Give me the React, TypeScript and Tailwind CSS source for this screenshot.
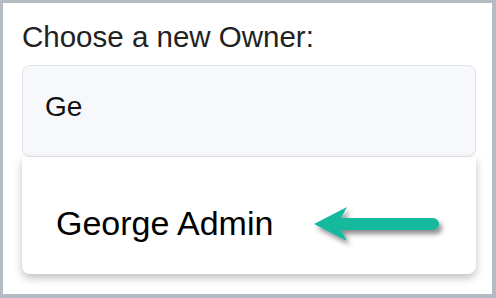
import React from "react";

const ArrowLeft = () => (
  <svg width="140" height="50" viewBox="0 0 140 50" className="shrink-0">
    <defs>
      <filter id="arrowShadow" x="-20%" y="-40%" width="140%" height="200%">
        <feDropShadow dx="3" dy="4" stdDeviation="2.5" floodColor="#000" floodOpacity="0.45" />
      </filter>
    </defs>
    <path
      d="M8 24 L41 7 L35 18 L127 18 A6 6 0 0 1 127 30 L35 30 L41 41 Z"
      fill="#12b99d"
      filter="url(#arrowShadow)"
    />
  </svg>
);

const App = () => {
  return (
    <div
      className="w-[496px] h-[298px] bg-white border-[#b4bbc3] border-t-[3px] border-l-[3px] border-r-4 border-b-4 pl-[19px] pt-[17px]"
      style={{ fontFamily: '"Liberation Sans", Arial, sans-serif' }}
    >
      <div className="text-[29.5px] leading-[34px] text-[#222]">Choose a new Owner:</div>

      <div className="mt-[11px] w-[454px] h-[92px] rounded-lg border border-[#dfe2e7] bg-[#f7f8fb] pl-[22px] pt-[25px]">
        <div className="text-[28px] leading-[32px] text-[#111]">Ge</div>
      </div>

      <div className="w-[454px] h-[117px] rounded-b-lg bg-white shadow-[0_4px_8px_rgba(0,0,0,0.25)] flex items-start pl-[34px] pt-[43px]">
        <span className="mt-[3px] text-[34px] leading-[40px] text-black">George Admin</span>
        <div className="ml-[33px]">
          <ArrowLeft />
        </div>
      </div>
    </div>
  );
};

export default App;
